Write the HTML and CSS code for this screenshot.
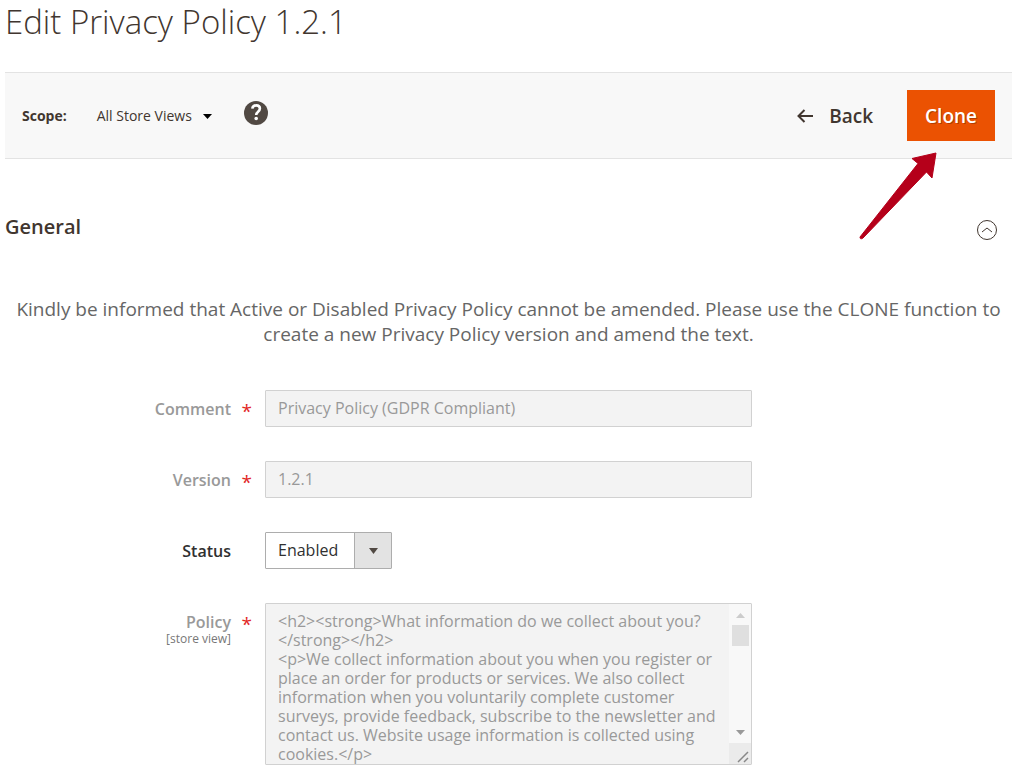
FILE: index.html
```html
<!DOCTYPE html>
<html lang="en">
<head>
    <meta charset="UTF-8">
    <meta name="viewport" content="width=device-width, initial-scale=1.0">
    <title>Edit Privacy Policy 1.2.1</title>
    <link rel="stylesheet" href="styles.css">
</head>
<body>
    <div class="page">
        <h1 class="page-title">Edit Privacy Policy 1.2.1</h1>

        <!-- Scope switcher and actions -->
        <div class="page-actions">
            <div class="scope">
                <span class="scope-label" id="scopeLabel">Scope:</span>
                <button type="button" class="scope-toggle" aria-describedby="scopeLabel">
                    All Store Views
                    <svg class="caret" width="9" height="5" viewBox="0 0 9 5" aria-hidden="true"><path d="M0 0h9L4.500 5z"/></svg>
                </button>
                <a class="help" href="#" aria-label="What is this?">
                    <svg width="24" height="24" viewBox="0 0 24 24" aria-hidden="true">
                        <circle cx="12" cy="12" r="12" fill="#514943"/>
                        <path d="M8.300 7.600C8.600 5.300 10.200 4.400 12.200 4.400c2.200 0 3.700 1.300 3.700 3.200 0 3.200-3.700 3.100-3.700 6.400" fill="none" stroke="#fff" stroke-width="2.600"/>
                        <circle cx="12.200" cy="17.500" r="1.800" fill="#fff"/>
                    </svg>
                </a>
            </div>
            <div class="buttons">
                <button type="button" class="back-btn">
                    <svg width="16" height="14" viewBox="0 0 16 14" aria-hidden="true"><path d="M7.500 1 1.500 7l6 6M1.500 7H16" fill="none" stroke="currentColor" stroke-width="2"/></svg>
                    Back
                </button>
                <div class="clone">
                    <button type="button" class="clone-btn">Clone</button>
                    <!-- Pointer to the Clone button -->
                    <svg class="pointer" width="80" height="90" viewBox="0 0 80 90" aria-hidden="true"><path d="M77 2 53 7.500 59 12.500 1 86Q1 89 4 87L67.500 21l5.500 6z" fill="#b5001a" stroke="#b5001a" stroke-linejoin="round"/></svg>
                </div>
            </div>
        </div>

        <div class="section-header">
            <h2>General</h2>
            <button type="button" class="collapse-btn" aria-label="Collapse General">
                <svg width="22" height="22" viewBox="0 0 22 22" fill="none" stroke="#41362f" aria-hidden="true"><circle cx="11" cy="11" r="9.500"/><path d="m6 13 5-4 5 4"/></svg>
            </button>
        </div>

        <p class="notice">Kindly be informed that Active or Disabled Privacy Policy cannot be amended. Please use the CLONE function to create a new Privacy Policy version and amend the text.</p>

        <form class="policy-form">
            <div class="field required disabled">
                <label for="comment">Comment</label>
                <input type="text" id="comment" value="Privacy Policy (GDPR Compliant)" disabled>
            </div>
            <div class="field required disabled">
                <label for="version">Version</label>
                <input type="text" id="version" value="1.2.1" disabled>
            </div>
            <div class="field">
                <label for="status">Status</label>
                <select id="status">
                    <option>Enabled</option>
                </select>
            </div>
            <div class="field required disabled">
                <label for="policy">Policy <small>[store view]</small></label>
                <div class="textarea-wrap">
                    <textarea id="policy" disabled>&lt;h2&gt;&lt;strong&gt;What information do we collect about you?&lt;/strong&gt;&lt;/h2&gt;
&lt;p&gt;We collect information about you when you register or place an order for products or services. We also collect information when you voluntarily complete customer surveys, provide feedback, subscribe to the newsletter and contact us. Website usage information is collected using cookies.&lt;/p&gt;</textarea>
                    <div class="scrollbar" aria-hidden="true">
                        <svg width="9" height="5" viewBox="0 0 9 5" fill="#ccc"><path d="M0 5h9L4.500 0z"/></svg>
                        <span class="thumb"></span>
                        <svg class="down" width="9" height="5" viewBox="0 0 9 5" fill="#999"><path d="M0 0h9L4.500 5z"/></svg>
                        <span class="resizer">
                            <svg width="12" height="12" viewBox="0 0 12 12" stroke="#888" stroke-width="1.500"><path d="M1 11 11 1M7 11l4-4"/></svg>
                        </span>
                    </div>
                </div>
            </div>
        </form>
    </div>
</body>
</html>
```
FILE: styles.css
```css
* {
    box-sizing: border-box;
}

body {
    margin: 0;
    background-color: #fff;
    color: #41362f;
    font-family: "Open Sans", "Noto Sans", sans-serif;
    font-size: 16px;
}

button, input, select, textarea {
    font-family: inherit;
    font-size: 16px;
}

button {
    padding: 0;
    border: 0;
    background: none;
    color: inherit;
    cursor: pointer;
}

svg {
    display: block;
}

.page {
    padding: 0 6px 7px 5px;
}

.page-title {
    margin: 0 0 28px;
    font-size: 33px;
    font-weight: 300;
    line-height: 44px;
}

/* Actions bar */
.page-actions {
    display: flex;
    justify-content: space-between;
    align-items: center;
    padding: 17px;
    border-top: 1px solid #e3e3e3;
    border-bottom: 1px solid #e3e3e3;
    background-color: #f8f8f8;
}

.scope, .buttons {
    display: flex;
    align-items: center;
}

.scope-label {
    margin-right: 30px;
    font-size: 14px;
    font-weight: 700;
}

.scope-toggle {
    display: flex;
    align-items: center;
    gap: 11px;
    margin-right: 32px;
    font-size: 14px;
}

.caret {
    margin-top: 2px;
    fill: #000;
}

.help {
    margin-bottom: 5px;
}

.back-btn {
    display: flex;
    align-items: center;
    gap: 16px;
    margin-right: 34px;
    font-size: 19px;
    font-weight: 600;
}

.clone {
    position: relative;
}

.clone-btn {
    height: 51px;
    padding: 0 18px;
    background-color: #eb5202;
    color: #fff;
    font-size: 19px;
    font-weight: 600;
    text-shadow: 1px 1px 0 rgba(0, 0, 0, 0.25);
}

.pointer {
    position: absolute;
    top: 61px;
    right: 56px;
    pointer-events: none;
}

/* Section */
.section-header {
    display: flex;
    justify-content: space-between;
    align-items: flex-end;
    margin: 54px 14px 56px 0;
}

.section-header h2 {
    margin: 0;
    font-size: 20px;
    font-weight: 600;
    line-height: 28px;
}

.notice {
    margin: 0 0 43px;
    color: #666;
    font-size: 19px;
    line-height: 25px;
    text-align: center;
}

/* Form */
.policy-form {
    display: flex;
    flex-direction: column;
    gap: 34px;
}

.field {
    display: grid;
    grid-template-columns: 226px minmax(0, 487px);
    column-gap: 34px;
    align-items: start;
}

.field label {
    position: relative;
    padding-top: 8px;
    color: #303030;
    font-weight: 600;
    line-height: 22px;
    text-align: right;
}

.field label small {
    display: block;
    margin-top: -2px;
    color: #777;
    font-size: 12px;
    font-weight: 400;
    line-height: 16px;
}

.disabled label {
    color: #999;
}

.required label::after {
    content: "*";
    position: absolute;
    top: 10px;
    right: -21px;
    color: #e22626;
    font-size: 19px;
    font-weight: 400;
}

.field input, .field textarea {
    width: 100%;
    border: 1px solid #d1d1d1;
    border-radius: 1px;
    background-color: #f3f3f3;
    color: #999;
}

.field input {
    height: 37px;
    padding: 0 12px 2px;
}

.field select {
    appearance: none;
    justify-self: start;
    width: 127px;
    height: 37px;
    padding: 0 12px 2px;
    border: 1px solid #adadad;
    border-radius: 1px;
    background:
        url("data:image/svg+xml,%3Csvg xmlns='http://www.w3.org/2000/svg' width='9' height='6'%3E%3Cpath d='M0 0h9L4.500 6z' fill='%23514943'/%3E%3C/svg%3E") no-repeat right 13px center,
        linear-gradient(#adadad, #adadad) no-repeat right 36px top / 1px 100%,
        linear-gradient(#e3e3e3, #e3e3e3) no-repeat right / 36px 100%,
        #fff;
    color: #303030;
}

.textarea-wrap {
    position: relative;
}

.field textarea {
    display: block;
    height: 162px;
    padding: 8px 32px 0 12px;
    line-height: 19px;
    resize: none;
}

/* Scrollbar over the right edge of the textarea */
.scrollbar {
    position: absolute;
    top: 1px;
    right: 1px;
    bottom: 1px;
    display: flex;
    flex-direction: column;
    align-items: center;
    width: 22px;
    padding-top: 9px;
    background-color: #f8f8f8;
}

.scrollbar .thumb {
    width: 17px;
    height: 21px;
    margin-top: 7px;
    background-color: #dfdfdf;
}

.scrollbar .down {
    margin-top: auto;
}

.scrollbar .resizer {
    display: flex;
    justify-content: flex-end;
    align-items: flex-end;
    width: 100%;
    height: 21px;
    margin-top: 8px;
    padding: 1px 2px;
    background-color: #ebebeb;
}
```
